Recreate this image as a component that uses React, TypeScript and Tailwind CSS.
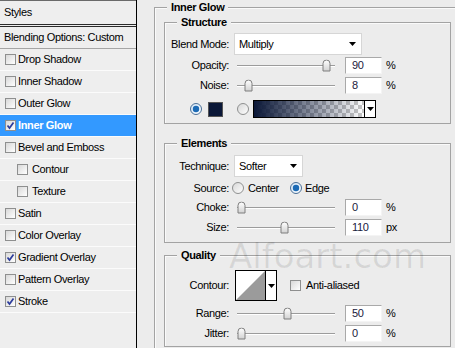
import React from "react";

const FONT = "font-['Liberation_Sans',Arial,sans-serif]";

const styles = [
  { name: "Drop Shadow", checked: false },
  { name: "Inner Shadow", checked: false },
  { name: "Outer Glow", checked: false },
  { name: "Inner Glow", checked: true, active: true },
  { name: "Bevel and Emboss", checked: false },
  { name: "Contour", checked: false, indent: true },
  { name: "Texture", checked: false, indent: true },
  { name: "Satin", checked: false },
  { name: "Color Overlay", checked: false },
  { name: "Gradient Overlay", checked: true },
  { name: "Pattern Overlay", checked: false },
  { name: "Stroke", checked: true },
];

function Check({ checked }: { checked: boolean }) {
  return (
    <span className="flex w-[11px] h-[11px] shrink-0 items-center justify-center border border-[#8e8f8f] bg-[linear-gradient(135deg,#d8d8d8,#ffffff)]">
      {checked && (
        <svg width="9" height="9" viewBox="0 0 9 9">
          <path d="M1.5 4.5 L3.5 7 L7.5 1.5" fill="none" stroke="#2c3c9c" strokeWidth="1.7" />
        </svg>
      )}
    </span>
  );
}

function Radio({ checked }: { checked: boolean }) {
  return (
    <svg width="12" height="12" viewBox="0 0 12 12" className="shrink-0">
      <defs>
        <linearGradient id={checked ? "rg1" : "rg0"} x1="0" y1="0" x2="1" y2="1">
          <stop offset="0" stopColor={checked ? "#cfe3f5" : "#d6d6d6"} />
          <stop offset="1" stopColor="#ffffff" />
        </linearGradient>
      </defs>
      <circle cx="6" cy="6" r="5.5" fill={`url(#${checked ? "rg1" : "rg0"})`} stroke={checked ? "#4b6f96" : "#8e8f8f"} />
      {checked && <circle cx="6" cy="6" r="3.2" fill="#1b6ab5" />}
    </svg>
  );
}

function Arrow() {
  return (
    <svg width="7" height="4" viewBox="0 0 7 4">
      <path d="M0 0 H7 L3.5 4 Z" fill="#000" />
    </svg>
  );
}

// thumb offset in px along the 98px track
function Slider({ pos }: { pos: number }) {
  return (
    <div className="relative flex h-full w-[98px] items-center">
      <div className="h-[2px] w-full border-t border-[#9c9c9c] border-b-white border-b" />
      <svg
        width="9"
        height="13"
        viewBox="0 0 9 13"
        className="absolute top-1/2 -translate-y-1/2"
        style={{ left: `${pos}px` }}
      >
        <defs>
          <linearGradient id="thumb" x1="0" y1="0" x2="0" y2="1">
            <stop offset="0" stopColor="#ffffff" />
            <stop offset="1" stopColor="#d2d2d2" />
          </linearGradient>
        </defs>
        <path d="M1 4 Q1 0.5 4.5 0.5 Q8 0.5 8 4 V11.5 H1 Z" fill="url(#thumb)" stroke="#7e7e7e" />
      </svg>
    </div>
  );
}

function NumBox({ value }: { value: string }) {
  return (
    <div className="flex h-full w-[37px] items-center border border-t-[#a9a9a9] border-l-[#a9a9a9] border-r-[#f4f4f4] border-b-[#f4f4f4] bg-white pl-[6px] text-[#1a1a3c]">
      {value}
    </div>
  );
}

function Label({ children }: { children: React.ReactNode }) {
  return <span className="w-[64px] shrink-0 text-right">{children}</span>;
}

function SliderRow({ label, pos, value, unit, className }: { label: string; pos: number; value: string; unit: string; className: string }) {
  return (
    <div className={`flex h-[17px] items-center ${className}`}>
      <Label>{label}</Label>
      <div className="ml-[8px] h-full">
        <Slider pos={pos} />
      </div>
      <div className="ml-[10px] h-full">
        <NumBox value={value} />
      </div>
      <span className="ml-[4px]">{unit}</span>
    </div>
  );
}

function Group({ title, className, children }: { title: string; className: string; children: React.ReactNode }) {
  return (
    <div className={`ml-[9px] w-[287px] border border-[#a3a3a3] shadow-[inset_1px_1px_0_#fafafa] ${className}`}>
      <div className="-mt-[8px] ml-[12px] h-[14px] w-fit bg-[#ececec] px-[4px] font-bold leading-[14px]">
        {title}
      </div>
      {children}
    </div>
  );
}

export default function App() {
  return (
    <div className={`relative flex h-[348px] w-[455px] overflow-hidden bg-[#ececec] text-[11px] tracking-[-0.35px] text-black ${FONT}`}>
      {/* Styles list */}
      <div className="flex w-[137px] shrink-0 flex-col border-r border-black bg-[#eeeeee]">
        <div className="flex h-[25px] items-center border-t border-b border-t-[#6a6a6a] border-b-[#2a2a2a] pl-[4px]">
          Styles
        </div>
        <div className="mt-[1px] flex h-[23px] items-center border-t border-b border-t-[#2a2a2a] border-b-[#a5a5a5] pl-[4px]">
          Blending Options: Custom
        </div>
        {styles.map((s) => (
          <div
            key={s.name}
            className={`flex h-[22px] items-center gap-[2px] border-b border-[#fbfbfb] ${
              s.indent ? "pl-[17px]" : "pl-[5px]"
            } ${s.active ? "bg-[#3399ff] font-bold text-white" : ""}`}
          >
            <Check checked={s.checked} />
            <span className={s.indent ? "ml-[2px]" : ""}>{s.name}</span>
          </div>
        ))}
      </div>

      {/* Inner Glow settings */}
      <div className="flex-1 pl-[17px] pt-[7px]">
        <div className="h-[360px] w-[320px] border border-[#a3a3a3] shadow-[inset_1px_1px_0_#fafafa]">
          <div className="-mt-[8px] ml-[12px] h-[14px] w-fit bg-[#ececec] px-[4px] font-bold leading-[14px]">
            Inner Glow
          </div>

          <Group title="Structure" className="mt-[8px] h-[102px]">
            <div className="mt-[4px] flex h-[22px] items-center">
              <Label>Blend Mode:</Label>
              <div className="ml-[5px] flex h-full w-[128px] items-center justify-between border border-[#d6d6d6] bg-white pl-[4px] pr-[5px]">
                <span>Multiply</span>
                <Arrow />
              </div>
            </div>
            <SliderRow label="Opacity:" pos={85} value="90" unit="%" className="mt-[2px]" />
            <SliderRow label="Noise:" pos={7} value="8" unit="%" className="mt-[3px]" />
            <div className="mt-[6px] flex h-[18px] items-center pl-[25px]">
              <Radio checked />
              <div className="ml-[6px] h-[15px] w-[15px] border border-[#555] bg-[#0b1838]" />
              <div className="ml-[14px]">
                <Radio checked={false} />
              </div>
              <div className="ml-[4px] flex h-[18px] w-[123px] border border-black">
                <div className="flex-1 bg-[repeating-conic-gradient(#c6c6c6_0_25%,#ffffff_0_50%)] bg-[length:8px_8px]">
                  <div className="h-full w-full bg-[linear-gradient(to_right,#0b1838,rgba(11,24,56,0))]" />
                </div>
                <div className="flex w-[11px] items-center justify-center border-l border-black bg-white">
                  <Arrow />
                </div>
              </div>
            </div>
          </Group>

          <Group title="Elements" className="mt-[19px] h-[100px]">
            <div className="mt-[5px] flex h-[22px] items-center">
              <Label>Technique:</Label>
              <div className="ml-[5px] flex h-full w-[69px] items-center justify-between border border-[#d6d6d6] bg-white pl-[4px] pr-[5px]">
                <span>Softer</span>
                <Arrow />
              </div>
            </div>
            <div className="mt-[2px] flex h-[18px] items-center">
              <Label>Source:</Label>
              <div className="ml-[3px]">
                <Radio checked={false} />
              </div>
              <span className="ml-[4px]">Center</span>
              <div className="ml-[11px]">
                <Radio checked />
              </div>
              <span className="ml-[3px]">Edge</span>
            </div>
            <SliderRow label="Choke:" pos={0} value="0" unit="%" className="mt-[2px]" />
            <SliderRow label="Size:" pos={43} value="110" unit="px" className="mt-[3px]" />
          </Group>

          <Group title="Quality" className="mt-[12px] h-[92px]">
            <div className="mt-[8px] flex h-[31px] items-center">
              <Label>Contour:</Label>
              <div className="ml-[6px] flex h-full w-[42px] border border-black bg-white">
                <svg width="29" height="29" viewBox="0 0 29 29" className="shrink-0">
                  <path d="M0 29 L29 0 V29 Z" fill="#9b9b9b" />
                </svg>
                <div className="flex flex-1 items-center justify-center border-l border-black">
                  <Arrow />
                </div>
              </div>
              <div className="ml-[13px]">
                <Check checked={false} />
              </div>
              <span className="ml-[5px]">Anti-aliased</span>
            </div>
            <SliderRow label="Range:" pos={46} value="50" unit="%" className="mt-[4px]" />
            <SliderRow label="Jitter:" pos={0} value="0" unit="%" className="mt-[3px]" />
          </Group>
        </div>
      </div>

      {/* watermark */}
      <div className="pointer-events-none absolute left-[229px] top-[239px] font-['DejaVu_Sans',sans-serif] text-[34px] leading-none tracking-normal text-black/[0.09]">
        Alfoart.com
      </div>
    </div>
  );
}
